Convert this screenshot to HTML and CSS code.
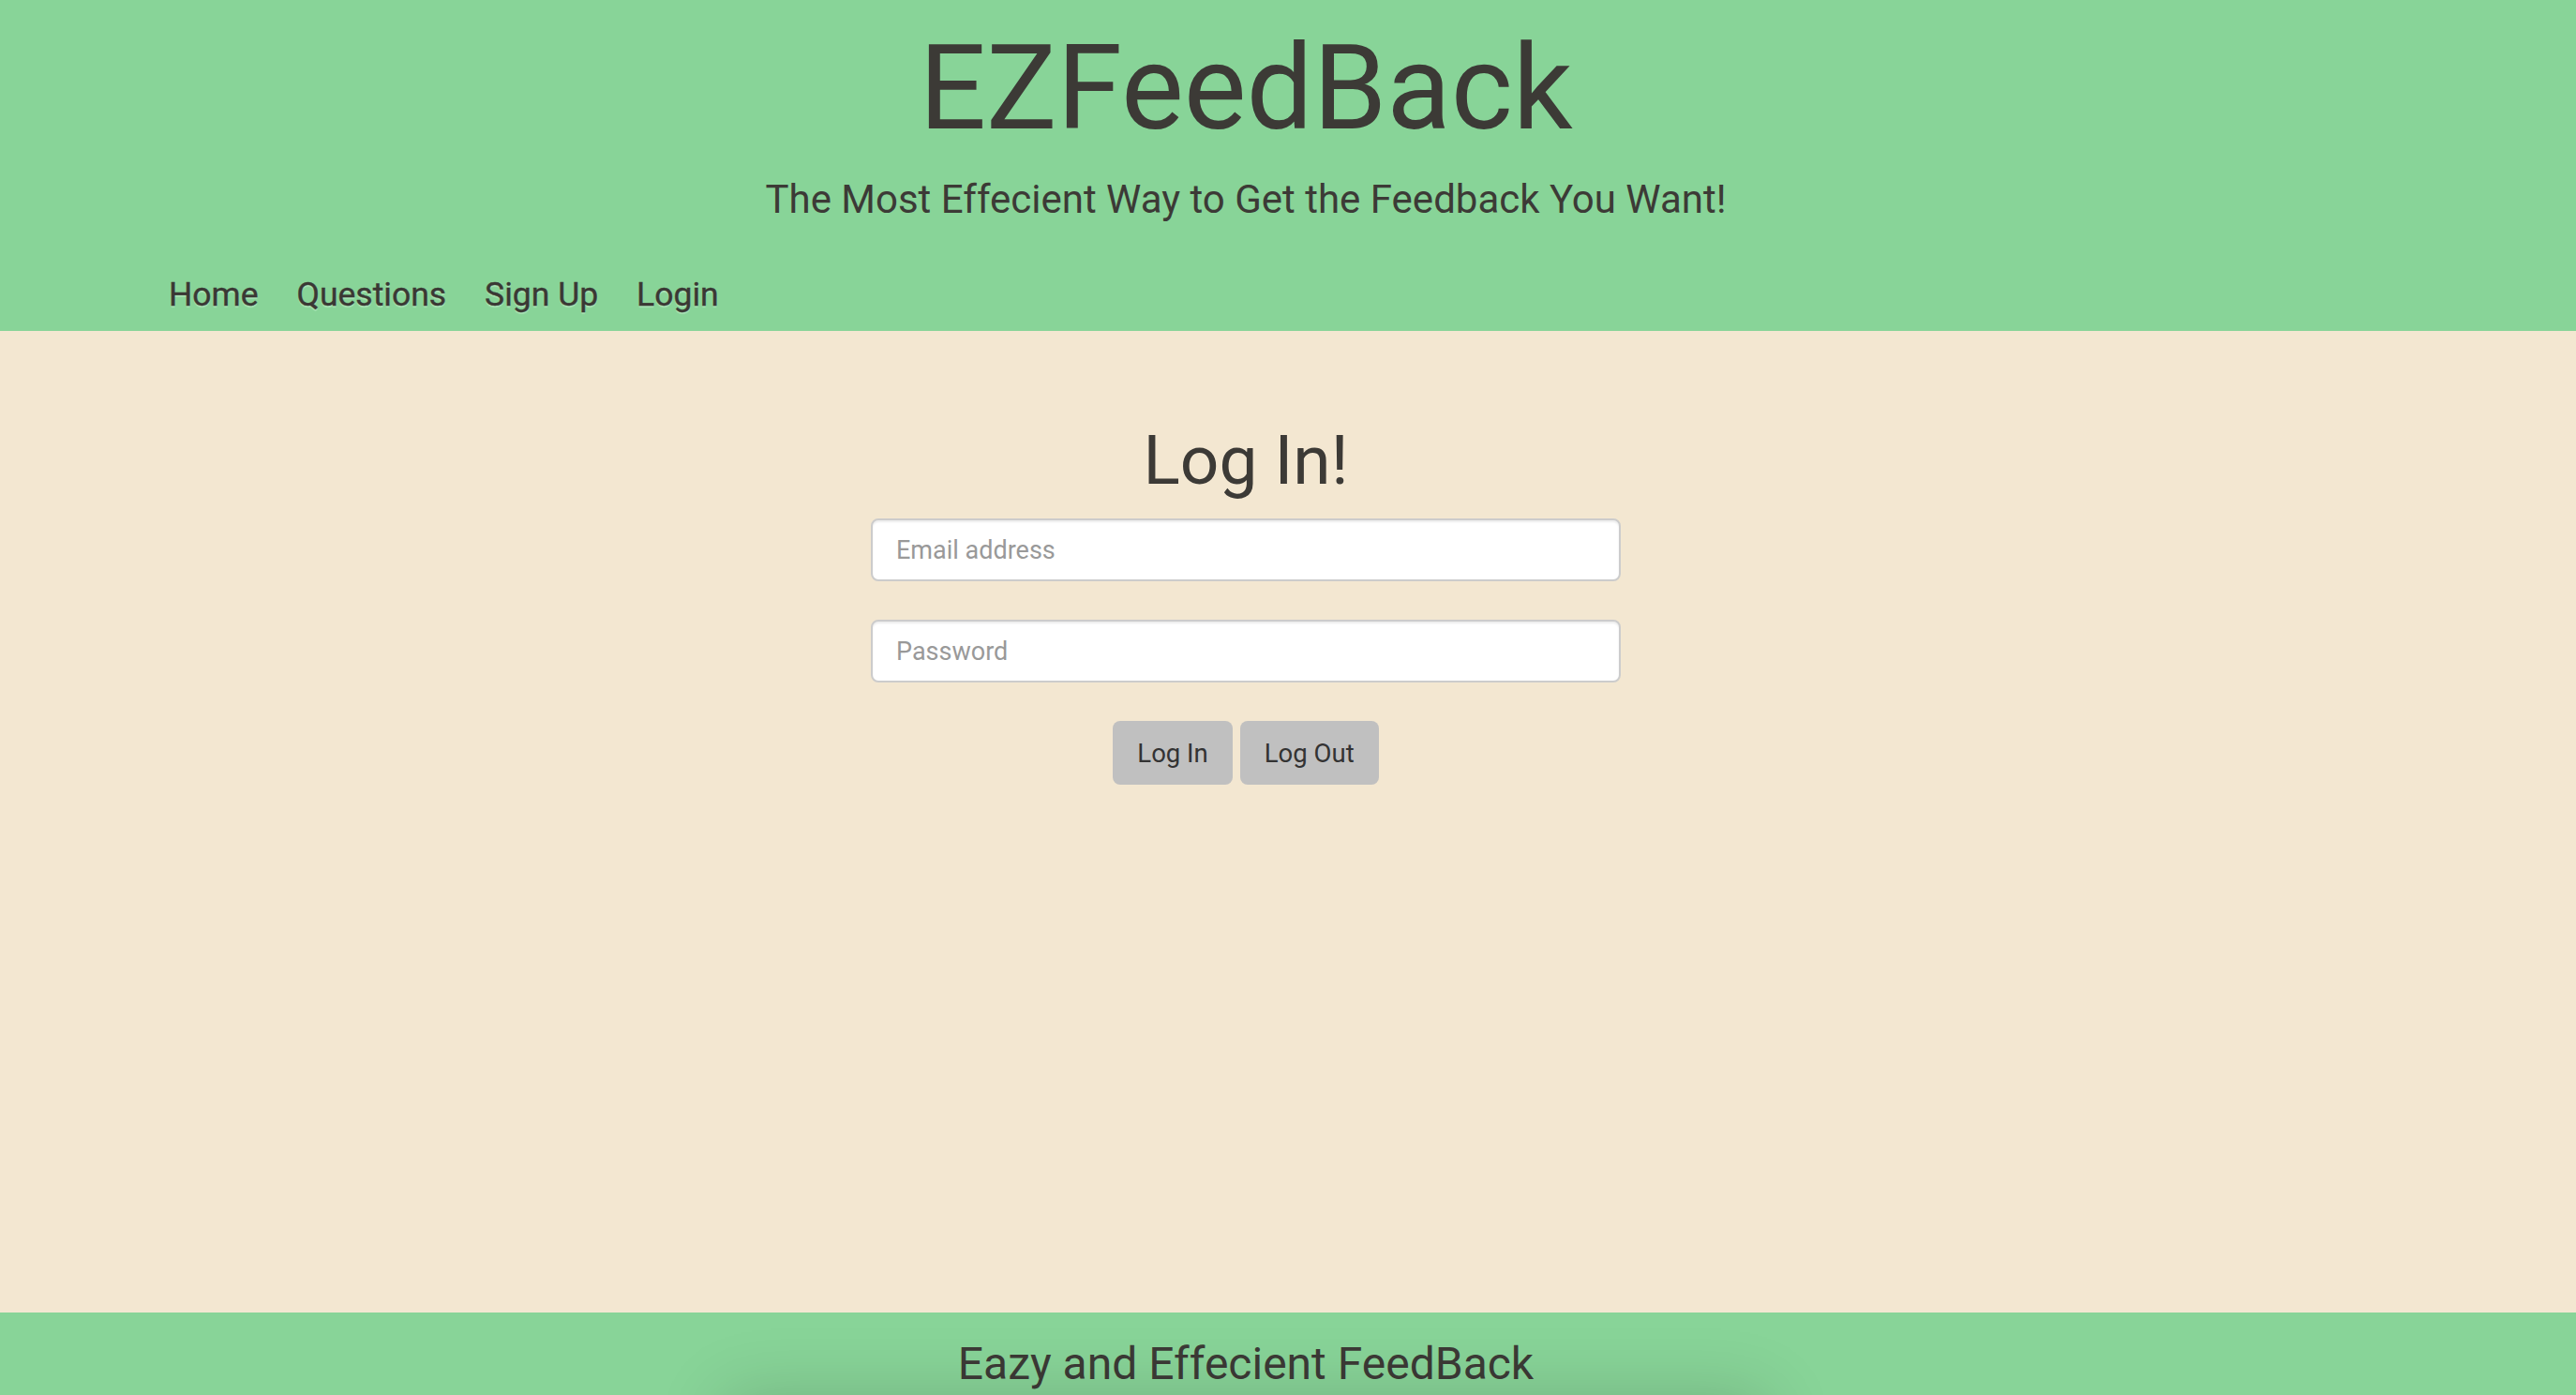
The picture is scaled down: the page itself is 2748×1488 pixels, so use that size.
FILE: index.html
```html
<!DOCTYPE html>
<html lang="en">
<head>
<meta charset="utf-8">
<title>EZFeedBack</title>
<link rel="stylesheet" href="styles.css">
</head>
<body>
<header class="site-header">
  <div class="header-inner">
    <h1 class="brand">EZFeedBack</h1>
    <p class="tagline">The Most Effecient Way to Get the Feedback You Want!</p>
  </div>
  <nav class="nav">
    <a href="#" class="nav-link">Home</a>
    <a href="#" class="nav-link">Questions</a>
    <a href="#" class="nav-link">Sign Up</a>
    <a href="#" class="nav-link">Login</a>
  </nav>
</header>
<main class="main">
  <form class="login-form">
    <h2 class="login-title">Log In!</h2>
    <input class="field field-email" type="email" placeholder="Email address">
    <input class="field field-password" type="password" placeholder="Password">
    <div class="actions">
      <button type="button" class="btn">Log In</button>
      <button type="button" class="btn">Log Out</button>
    </div>
  </form>
</main>
<footer class="site-footer">
  <p class="footer-text">Eazy and Effecient FeedBack</p>
  <div class="footer-card"></div>
</footer>
</body>
</html>
```

FILE: styles.css
```css
* { box-sizing: border-box; }
html, body { margin: 0; padding: 0; }
body {
  font-family: Roboto, "Liberation Sans", Arial, sans-serif;
  color: #3c3a36;
  background: #f3e7d1;
  overflow: hidden;
}
.site-header {
  background: #88d498;
  padding-top: 19px;
  padding-bottom: 17px;
}
.header-inner {
  margin-right: 90px;
  text-align: center;
}
.brand {
  margin: 0;
  font-size: 126px;
  line-height: 150px;
  font-weight: 400;
}
.tagline {
  margin: 19px 0 0;
  font-size: 42px;
  line-height: 50px;
}
.nav {
  display: flex;
  gap: 41px;
  padding-left: 180px;
  margin-top: 54px;
}
.nav-link {
  font-size: 35.5px;
  line-height: 44px;
  color: #3a3834;
  text-decoration: none;
  -webkit-text-stroke: 0.4px #3a3834;
  text-shadow: 0 2px 1px rgba(190, 235, 200, 0.6);
}
.main {
  height: 1047px;
  padding-top: 95px;
}
.login-form {
  width: 800px;
  margin: 0 auto;
  position: relative;
  left: -45px;
  display: flex;
  flex-direction: column;
  align-items: center;
}
.login-title {
  margin: 0;
  font-size: 73px;
  line-height: 86px;
  font-weight: 400;
}
.field {
  width: 800px;
  height: 67px;
  border: 2px solid #cccccc;
  border-radius: 8px;
  background: #fff;
  box-shadow: inset 0 2px 2px rgba(0, 0, 0, 0.075);
  padding: 0 25px;
  font-family: Roboto, "Liberation Sans", Arial, sans-serif;
  font-size: 27px;
  color: #555;
}
.field::placeholder { color: #999999; }
.field-email { margin-top: 19px; }
.field-password { margin-top: 41px; }
.actions {
  margin-top: 41px;
  display: flex;
  gap: 8px;
}
.btn {
  height: 68px;
  padding: 0 24px;
  border: 2px solid transparent;
  border-radius: 8px;
  background: #c0c0c0;
  color: #333;
  font-family: Roboto, "Liberation Sans", Arial, sans-serif;
  font-size: 27.5px;
}
.site-footer {
  background: #88d498;
  padding-top: 26px;
  padding-bottom: 200px;
}
.footer-text {
  margin: 0 90px 0 0;
  text-align: center;
  font-size: 48px;
  line-height: 58px;
}
.footer-card {
  width: 1080px;
  height: 200px;
  margin: 20px auto 0;
  position: relative;
  left: -45px;
  background: #88d498;
  box-shadow: 0 0 70px 16px rgba(0, 0, 0, 0.16);
}
```
